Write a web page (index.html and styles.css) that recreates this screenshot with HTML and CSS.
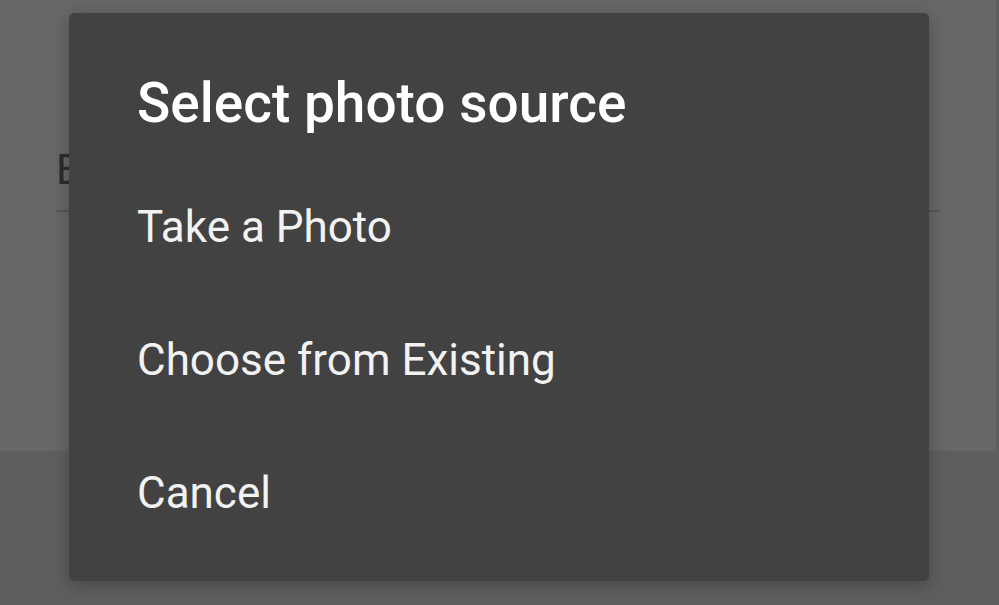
FILE: index.html
```html
<!DOCTYPE html>
<html>
<head>
<meta charset="utf-8">
<link rel="stylesheet" href="styles.css">
</head>
<body>
<div class="page">
  <div class="sheet">
    <div class="field">
      <span class="field-text">Edit profile</span>
    </div>
  </div>
</div>
<div class="dialog">
  <h1 class="title">Select photo source</h1>
  <ul class="options">
    <li class="option">Take a Photo</li>
    <li class="option">Choose from Existing</li>
    <li class="option">Cancel</li>
  </ul>
</div>
</body>
</html>
```
FILE: styles.css
```css
html, body {
  margin: 0;
  padding: 0;
}
body {
  width: 999px;
  height: 605px;
  background: #5e5e5e;
  font-family: Roboto, "Noto Sans", sans-serif;
  overflow: hidden;
  position: relative;
}
.page {
  display: flex;
  flex-direction: column;
}
.sheet {
  width: 996px;
  height: 451px;
  background: #676767;
  border-radius: 0 0 4px 0;
  box-sizing: border-box;
  padding: 142px 56px 0 56px;
}
.field {
  height: 70px;
  border-bottom: 2px solid #565656;
  box-sizing: border-box;
  overflow: hidden;
}
.field-text {
  font-size: 42px;
  line-height: 56px;
  color: #2c2c2c;
  white-space: nowrap;
}
.dialog {
  position: absolute;
  left: 69px;
  top: 13px;
  width: 860px;
  height: 568px;
  background: #424242;
  border-radius: 5px;
  box-shadow: 0 4px 18px rgba(0,0,0,0.25);
  box-sizing: border-box;
  padding: 62px 0 0 68px;
}
.title {
  margin: 0;
  font-size: 55px;
  line-height: 57px;
  font-weight: 500;
  color: #ffffff;
}
.options {
  list-style: none;
  margin: 29px 0 0 0;
  padding: 0;
}
.option {
  font-size: 44px;
  line-height: 133px;
  color: #f2f2f2;
}
```
